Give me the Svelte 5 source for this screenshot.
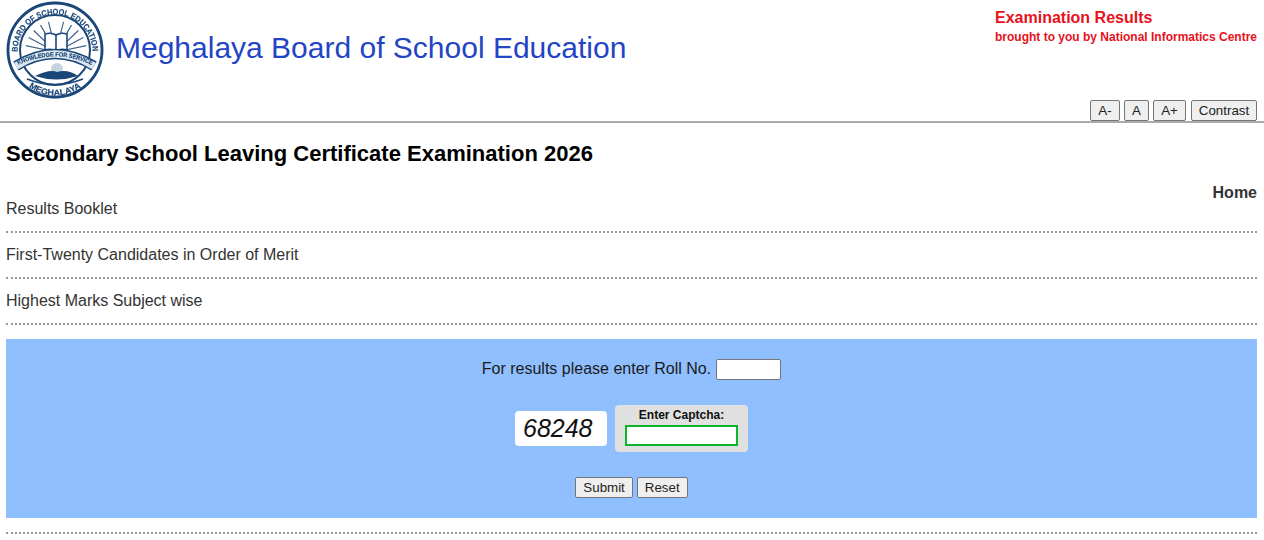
<script>
  const rays = [-78,-62,-46,-30,-14,14,30,46,62,78];
</script>

<header class="top">
  <div class="brand">
    <svg class="logo" viewBox="0 0 108 100" width="108" height="100" aria-label="Board of School Education seal">
      <defs>
        <path id="arcTop" d="M 17.5 52 A 37.5 37.5 0 0 1 92.5 52" />
        <path id="arcMid" d="M 12 68 Q 55 45 98 68" />
        <path id="arcBot" d="M 24 83 A 45 45 0 0 0 86 83" />
      </defs>
      <circle cx="55" cy="50" r="48.5" fill="#c9d8e8" />
      <circle cx="55" cy="50" r="47" fill="#fff" stroke="#1a4678" stroke-width="2.8" />
      <circle cx="55" cy="50" r="35" fill="#fff" stroke="#1a4678" stroke-width="2" />
      <g stroke="#3f6486" stroke-width="1.2">
        {#each rays as r}
          <line x1="56" y1="58" x2="56" y2="21" transform="rotate({r} 56 52)" />
        {/each}
      </g>
      <path d="M45 34q6-2 11 1v16q-5-3-11-1zM56 35q5-3 11-1v16q-6-2-11 1z" fill="#fff" stroke="#1a4678" stroke-width="1.6" />
      <path d="M16 66 Q 55 42 94 66" fill="none" stroke="#1a4678" stroke-width="10.5" />
      <path d="M16 66 Q 55 42 94 66" fill="none" stroke="#dde6ef" stroke-width="7.5" />
      <circle cx="57" cy="69" r="6" fill="#c5d3e0" />
      <path d="M35 76 Q 50 69 57 72 Q 68 69 78 76 Q 56 83 35 76Z" fill="#1a4678" />
      <path d="M27 79 Q 55 90 83 79" fill="none" stroke="#1a4678" stroke-width="1.6" />
      <text class="seal"><textPath href="#arcTop" textLength="117" lengthAdjust="spacingAndGlyphs">BOARD OF SCHOOL EDUCATION</textPath></text>
      <text class="seal small"><textPath href="#arcMid" startOffset="50%" text-anchor="middle" textLength="76" lengthAdjust="spacingAndGlyphs">KNOWLEDGE FOR SERVICE</textPath></text>
      <text class="seal"><textPath href="#arcBot" startOffset="50%" text-anchor="middle" textLength="56" lengthAdjust="spacingAndGlyphs">MEGHALAYA</textPath></text>
    </svg>
    <h1>Meghalaya Board of School Education</h1>
  </div>
  <div class="side">
    <div class="tag">
      <div class="tag1">Examination Results</div>
      <div class="tag2">brought to you by National Informatics Centre</div>
    </div>
    <div class="sizes">
      <button class="w30">A-</button><button class="w25">A</button><button class="w33">A+</button><button class="w66">Contrast</button>
    </div>
  </div>
</header>

<main>
  <h2>Secondary School Leaving Certificate Examination 2026</h2>
  <div class="home">Home</div>
  <ul>
    <li>Results Booklet</li>
    <li>First-Twenty Candidates in Order of Merit</li>
    <li>Highest Marks Subject wise</li>
  </ul>
  <form class="panel" onsubmit={(e) => e.preventDefault()}>
    <div class="roll">
      <label for="roll">For results please enter Roll No.</label>
      <input id="roll" class="rollin" type="text" />
    </div>
    <div class="cap">
      <div class="code">68248</div>
      <div class="capbox">
        <label for="cap">Enter Captcha:</label>
        <input id="cap" class="capin" type="text" />
      </div>
    </div>
    <div class="acts">
      <button type="submit">Submit</button>
      <button type="reset">Reset</button>
    </div>
  </form>
  <div class="rule"></div>
</main>

<style>
  :global(body) {
    margin: 0;
    background: #fff;
    font-family: "Liberation Sans", Arial, sans-serif;
    color: #333;
  }
  .top {
    height: 121px;
    border-bottom: 2px solid #aaa;
    display: flex;
    justify-content: space-between;
    padding-right: 7px;
  }
  .brand {
    display: flex;
    align-items: flex-start;
  }
  .logo {
    display: block;
    filter: blur(0.35px);
  }
  .seal {
    font: bold 8.2px "Liberation Sans", Arial, sans-serif;
    fill: #1a4678;
    stroke: #1a4678;
    stroke-width: 0.15px;
  }
  .seal.small {
    font-size: 6.2px;
  }
  h1 {
    margin: 30px 0 0 8px;
    font-size: 30px;
    line-height: 36px;
    font-weight: 400;
    color: #2344c4;
  }
  .side {
    display: flex;
    flex-direction: column;
    justify-content: space-between;
    align-items: flex-end;
  }
  .tag {
    width: 262px;
    padding-top: 8px;
    color: #e8111b;
    font-weight: 700;
  }
  .tag1 {
    font-size: 16px;
    line-height: 19px;
  }
  .tag2 {
    font-size: 12px;
    line-height: 15px;
    margin-top: 3px;
  }
  .sizes {
    display: flex;
    gap: 4px;
  }
  .sizes button {
    padding: 1px 0;
  }
  .w30 { width: 30px; }
  .w25 { width: 25px; }
  .w33 { width: 33px; margin-right: 1px; }
  .w66 { width: 66px; }
  button {
    font: 13.33px "Liberation Sans", Arial, sans-serif;
    color: #222;
    background: #efefef;
    border: 1px solid #767676;
    border-radius: 2px;
    padding: 1px 7px;
    height: 21px;
  }
  main {
    padding: 0 7px 0 6px;
  }
  h2 {
    margin: 0;
    padding-top: 18px;
    font-size: 22px;
    line-height: 25px;
    color: #000;
  }
  .home {
    text-align: right;
    font-size: 16px;
    font-weight: 700;
    line-height: 18px;
    margin-top: 18px;
  }
  ul {
    list-style: none;
    margin: -15px 0 0;
    padding: 0;
  }
  li {
    padding: 13px 0 13px;
    font-size: 16px;
    line-height: 18px;
    border-bottom: 2px dotted #999;
  }
  .panel {
    margin-top: 14px;
    height: 179px;
    background: #90bfff;
    display: flex;
    flex-direction: column;
    align-items: center;
  }
  .roll {
    margin-top: 20px;
    display: flex;
    align-items: center;
    gap: 5px;
    font-size: 16px;
    color: #1a1a1a;
  }
  .roll label {
    position: relative;
    top: -1px;
  }
  .rollin {
    width: 65px;
    height: 21px;
    box-sizing: border-box;
    border: 1px solid #767676;
    border-radius: 2px;
    background: #fff;
    padding: 0;
  }
  .cap {
    margin-top: 25px;
    display: flex;
    align-items: center;
    gap: 8px;
  }
  .code {
    width: 84px;
    height: 35px;
    padding-left: 8px;
    background: #fff;
    border-radius: 4px;
    font-size: 25px;
    font-style: italic;
    line-height: 35px;
    color: #111;
  }
  .capbox {
    width: 133px;
    height: 47px;
    background: #e0e0e0;
    border-radius: 4px;
    display: flex;
    flex-direction: column;
    align-items: center;
    box-sizing: border-box;
    padding-top: 3px;
  }
  .capbox label {
    font-size: 12px;
    font-weight: 700;
    line-height: 14px;
    color: #111;
  }
  .capin {
    margin-top: 3px;
    width: 113px;
    height: 21px;
    box-sizing: border-box;
    border: 2px solid #0cb52c;
    background: #fff;
    padding: 0;
  }
  .acts {
    margin-top: 25px;
    display: flex;
    gap: 4px;
  }
  .rule {
    margin-top: 14px;
    border-bottom: 2px dotted #999;
  }
</style>
